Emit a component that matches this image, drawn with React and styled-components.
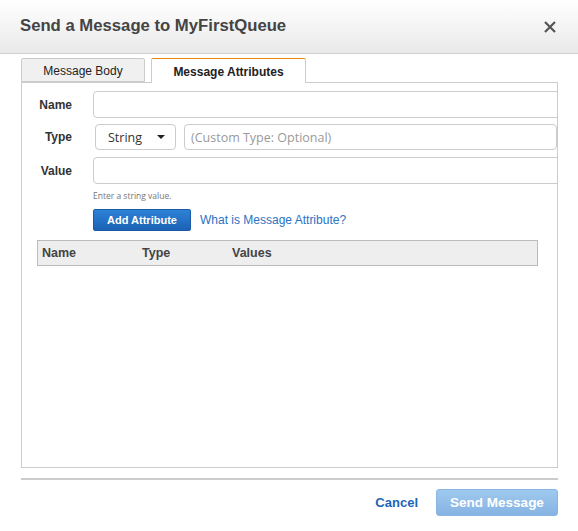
import React from "react";
import styled, { createGlobalStyle } from "styled-components";

const GlobalStyle = createGlobalStyle`
  html, body { margin: 0; padding: 0; background: #fff; }
  body { font-family: "Liberation Sans", Arial, sans-serif; }
  * { box-sizing: border-box; }
`;

const Dialog = styled.div`
  width: 578px;
  height: 531px;
  display: flex;
  flex-direction: column;
  background: #fff;
  overflow: hidden;
`;

const Header = styled.div`
  height: 54px;
  flex: none;
  display: flex;
  align-items: center;
  justify-content: space-between;
  padding: 0 21px 0 20px;
  background: linear-gradient(#ffffff, #e9e9e9);
  border-bottom: 1px solid #cfcfcf;
`;

const Title = styled.h1`
  margin: 0;
  font-size: 16.7px;
  font-weight: bold;
  color: #444;
  padding-bottom: 1px;
`;

const Close = styled.button`
  border: 0;
  background: none;
  padding: 0;
  width: 14px;
  height: 14px;
  display: flex;
  cursor: pointer;
`;

const Body = styled.div`
  padding: 4px 20px 0 21px;
  flex: none;
`;

const Tabs = styled.div`
  display: flex;
  gap: 6px;
  height: 24px;
`;

const Tab = styled.div`
  height: ${(p) => (p.active ? "25px" : "24px")};
  width: ${(p) => p.w}px;
  display: flex;
  align-items: center;
  justify-content: center;
  padding-top: 1px;
  font-size: 12px;
  color: #222;
  font-weight: ${(p) => (p.active ? "bold" : "normal")};
  background: ${(p) => (p.active ? "#fff" : "#f0f0f0")};
  border: 1px solid #ccc;
  border-top-color: ${(p) => (p.active ? "#e8890f" : "#ccc")};
  border-bottom: ${(p) => (p.active ? "0" : "1px solid #ccc")};
  border-radius: 2px 2px 0 0;
  position: relative;
  z-index: 1;
`;

const Panel = styled.div`
  height: 386px;
  border: 1px solid #ccc;
  overflow: hidden;
  padding-top: 8px;
`;

const Row = styled.div`
  display: flex;
  align-items: center;
  gap: 21px;
  margin-bottom: ${(p) => p.mb || 0}px;
  height: ${(p) => p.h || 27}px;
`;

const Label = styled.label`
  width: 50px;
  flex: none;
  text-align: right;
  font-size: 12px;
  font-weight: bold;
  color: #333;
`;

const TypeGroup = styled.div`
  flex: 1;
  height: 100%;
  display: flex;
  gap: 8px;
  margin-left: 2px;
`;

const TextInput = styled.input`
  flex: 1;
  height: 100%;
  min-width: 0;
  border: 1px solid #ccc;
  border-radius: 4px;
  padding: 0 6px;
  font-family: "Open Sans", "DejaVu Sans", sans-serif;
  font-size: 12.5px;
  color: #333;
  margin-right: ${(p) => (p.bleed ? "-8px" : "0")};
  &::placeholder { color: #9a9a9a; }
`;

const Select = styled.div`
  width: 81px;
  flex: none;
  height: 100%;
  border: 1px solid #ccc;
  border-radius: 4px;
  display: flex;
  align-items: center;
  justify-content: space-between;
  padding: 0 10px 0 12px;
  font-family: "Open Sans", "DejaVu Sans", sans-serif;
  font-size: 12.5px;
  color: #333;
`;

const Caret = styled.span`
  width: 0;
  height: 0;
  border-left: 4px solid transparent;
  border-right: 4px solid transparent;
  border-top: 4px solid #222;
`;

const Help = styled.div`
  margin: 6px 0 0 71px;
  height: 10px;
  font-family: "Open Sans", "DejaVu Sans", sans-serif;
  font-size: 8.5px;
  color: #777;
`;

const Actions = styled.div`
  display: flex;
  align-items: center;
  gap: 9px;
  margin: 9px 0 0 71px;
`;

const PrimarySmall = styled.button`
  width: 98px;
  height: 22px;
  border: 1px solid #1a5aa6;
  border-radius: 2px;
  background: linear-gradient(#2d82d6, #1b62b6);
  color: #fff;
  font-family: "Liberation Sans", Arial, sans-serif;
  font-weight: bold;
  font-size: 11px;
  padding: 0;
`;

const Link = styled.a`
  color: #2a72c2;
  font-size: 12px;
  text-decoration: none;
`;

const Table = styled.div`
  margin: 9px 19px 0 15px;
  height: 26px;
  background: #eee;
  border: 1px solid #bbb;
  display: grid;
  grid-template-columns: 100px 90px 1fr;
  align-items: center;
  padding-left: 4px;
`;

const Th = styled.div`
  font-size: 12.5px;
  font-weight: bold;
  color: #444;
`;

const Footer = styled.div`
  margin: 10px 20px 0 21px;
  border-top: 2px solid #ccc;
  padding-top: 9px;
  display: flex;
  justify-content: flex-end;
  align-items: center;
  gap: 18px;
`;

const Cancel = styled.a`
  font-size: 13px;
  font-weight: bold;
  color: #1b65b8;
  text-decoration: none;
`;

const SendButton = styled.button`
  width: 122px;
  height: 27px;
  border: 1px solid #8ab5e2;
  border-radius: 3px;
  background: linear-gradient(#9ec9ef, #86b3e2);
  color: #fff;
  font-family: "Liberation Sans", Arial, sans-serif;
  font-weight: bold;
  font-size: 13.5px;
  padding: 0;
`;

export default function App() {
  return (
    <Dialog>
      <GlobalStyle />
      <Header>
        <Title>Send a Message to MyFirstQueue</Title>
        <Close aria-label="Close">
          <svg width="14" height="14" viewBox="0 0 14 14">
            <path d="M2 2 L12 12 M12 2 L2 12" stroke="#555" strokeWidth="2.2" strokeLinecap="butt" />
          </svg>
        </Close>
      </Header>
      <Body>
        <Tabs>
          <Tab w={124}>Message Body</Tab>
          <Tab w={155} active>Message Attributes</Tab>
        </Tabs>
        <Panel>
          <Row mb={6}>
            <Label>Name</Label>
            <TextInput bleed />
          </Row>
          <Row mb={7} h={26}>
            <Label>Type</Label>
            <TypeGroup>
              <Select>
                String <Caret />
              </Select>
              <TextInput placeholder="(Custom Type: Optional)" />
            </TypeGroup>
          </Row>
          <Row h={27}>
            <Label>Value</Label>
            <TextInput bleed />
          </Row>
          <Help>Enter a string value.</Help>
          <Actions>
            <PrimarySmall>Add Attribute</PrimarySmall>
            <Link href="#">What is Message Attribute?</Link>
          </Actions>
          <Table>
            <Th>Name</Th>
            <Th>Type</Th>
            <Th>Values</Th>
          </Table>
        </Panel>
      </Body>
      <Footer>
        <Cancel href="#">Cancel</Cancel>
        <SendButton>Send Message</SendButton>
      </Footer>
    </Dialog>
  );
}
